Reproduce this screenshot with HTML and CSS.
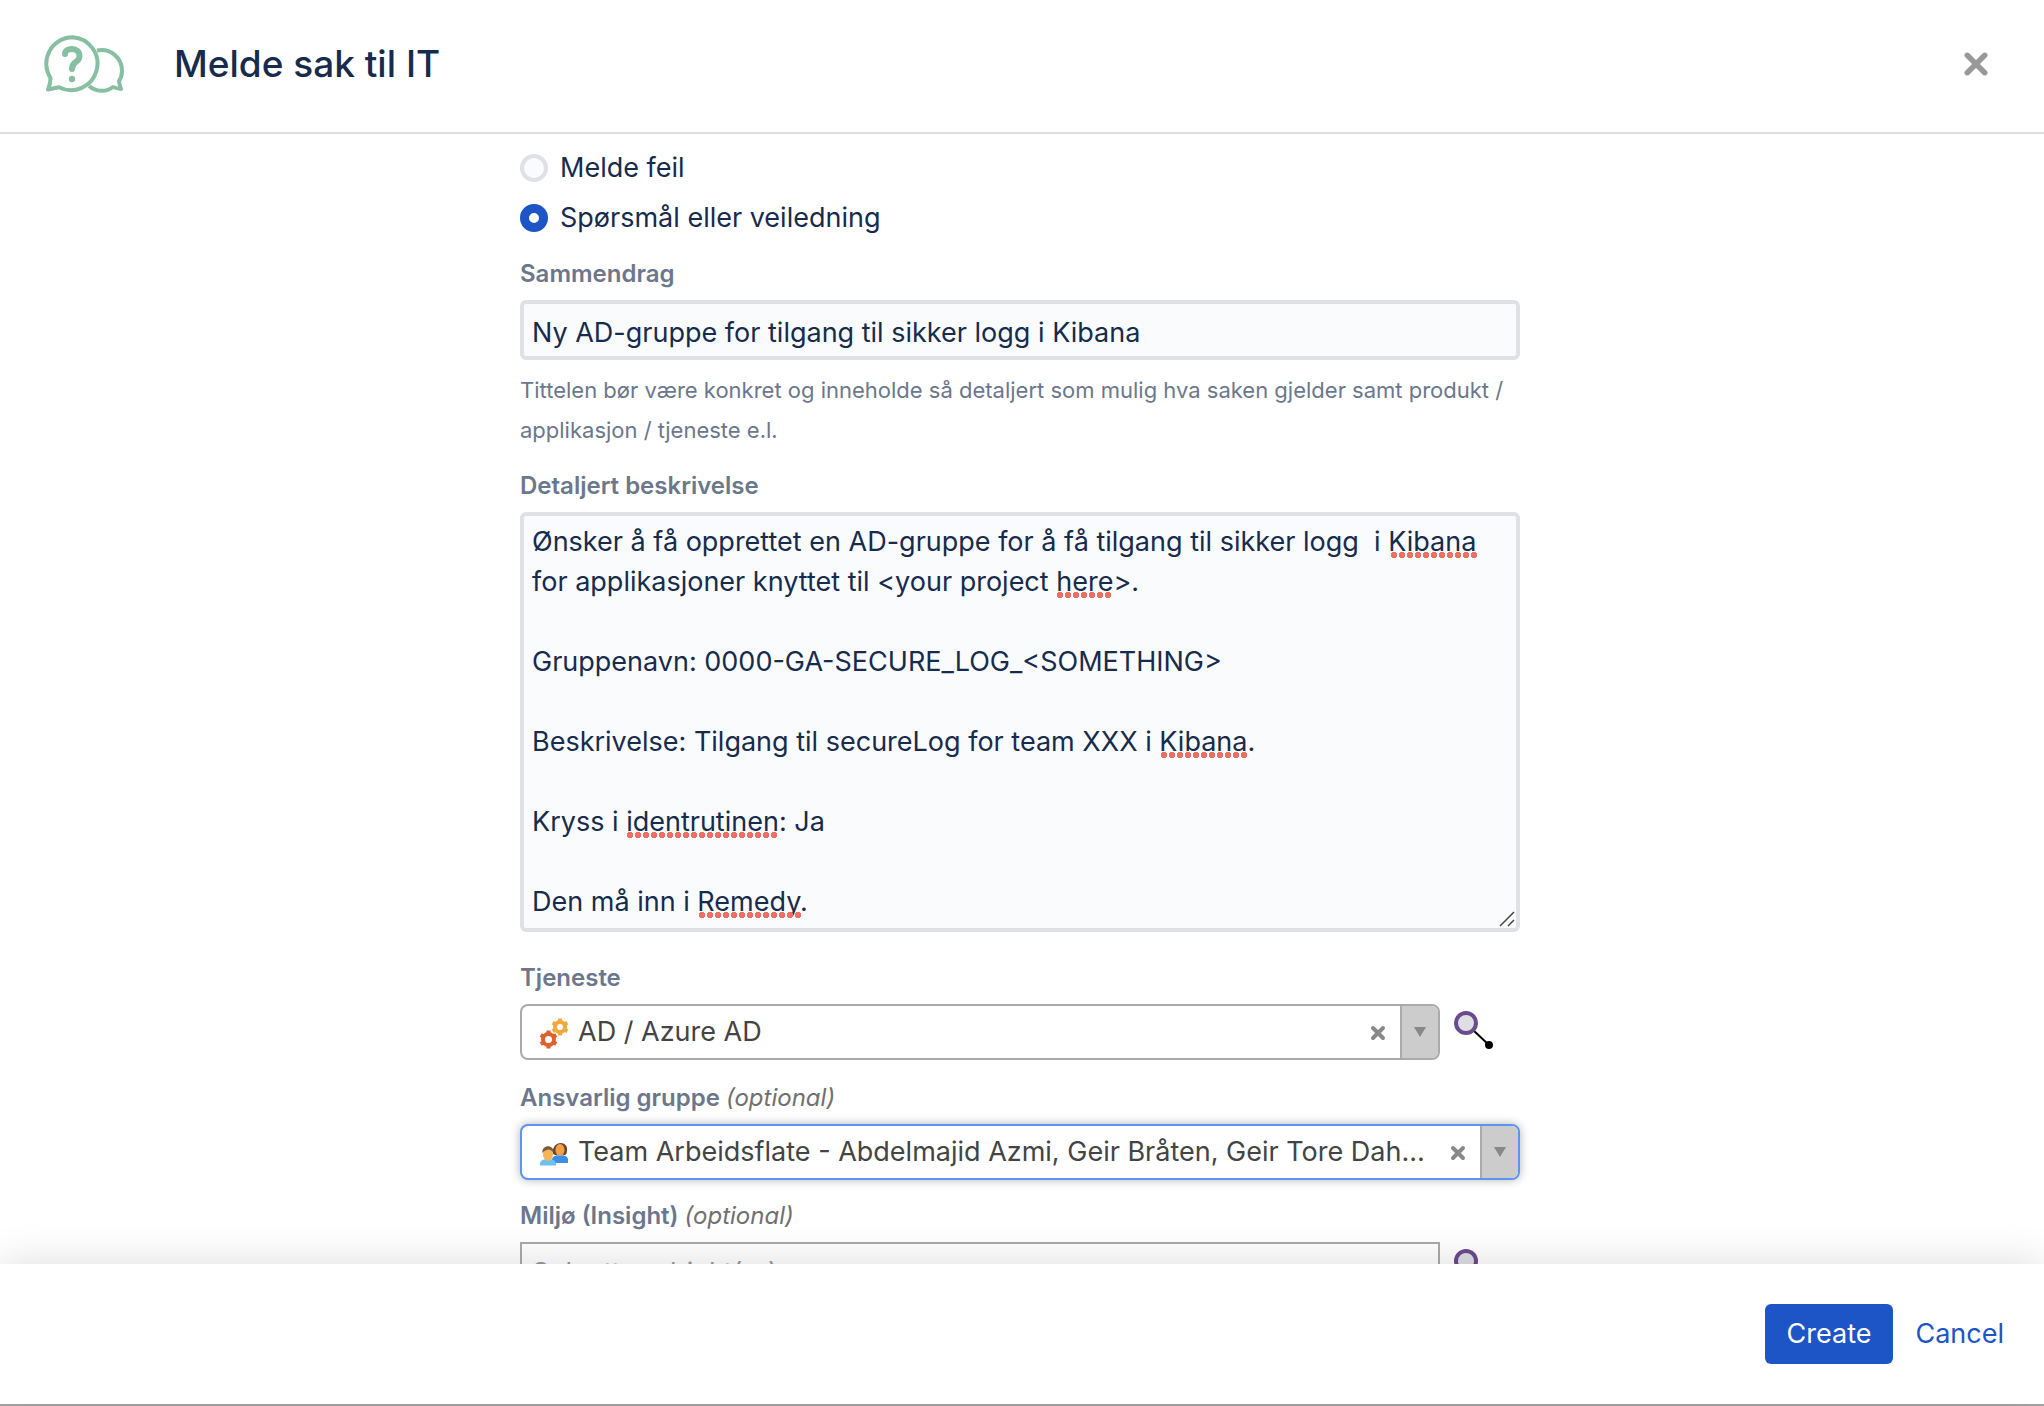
FILE: index.html
```html
<!DOCTYPE html>
<html lang="no">
<head>
<meta charset="utf-8">
<meta name="viewport" content="width=device-width, initial-scale=1">
<title>Melde sak til IT</title>
<link rel="stylesheet" href="styles.css">
</head>
<body>
<div class="dialog">
  <header class="dialog-header">
    <svg class="logo" viewBox="0 0 80 58" aria-hidden="true">
      <path d="M53 15.500C66 13 78 22 78 36C78 40 77 43 75 46Q75.500 50 77 54Q73 53.500 69 52C62 57.500 52 57 45 51"/>
      <path d="M28.500 2.200A26.500 26.500 0 1 1 15 52.300Q9 53.500 4 54.500Q6.500 49 6.500 43A26.500 26.500 0 0 1 28.500 2.200Z"/>
      <path class="logo-mark" d="M21 19C21 12 35.500 12 35.500 21C35.500 28 28 25.500 28 34"/>
      <circle class="logo-dot" cx="28" cy="44" r="3.200"/>
    </svg>
    <h1 class="dialog-title">Melde sak til IT</h1>
    <button class="icon-button close" type="button" aria-label="Close">
      <svg viewBox="0 0 22 22"><path d="M3 3L19 19M19 3L3 19"/></svg>
    </button>
  </header>

  <main class="dialog-body">
    <form class="form" id="request-form">
      <div class="radios">
        <label class="radio"><input type="radio" name="kind">Melde feil</label>
        <label class="radio"><input type="radio" name="kind" checked>Spørsmål eller veiledning</label>
      </div>

      <div class="field">
        <label class="label" for="summary">Sammendrag</label>
        <input class="text-input" id="summary" type="text" value="Ny AD-gruppe for tilgang til sikker logg i Kibana">
        <p class="help">Tittelen bør være konkret og inneholde så detaljert som mulig hva saken gjelder samt produkt / applikasjon / tjeneste e.l.</p>
      </div>

      <div class="field description">
        <label class="label" for="description">Detaljert beskrivelse</label>
        <div class="editor">
          <textarea class="text-area" id="description" rows="10" spellcheck="false">Ønsker å få opprettet en AD-gruppe for å få tilgang til sikker logg  i Kibana for applikasjoner knyttet til &lt;your project here&gt;.

Gruppenavn: 0000-GA-SECURE_LOG_&lt;SOMETHING&gt;

Beskrivelse: Tilgang til secureLog for team XXX i Kibana.

Kryss i identrutinen: Ja

Den må inn i Remedy.</textarea>
          <span class="typo typo-1"></span>
          <span class="typo typo-2"></span>
          <span class="typo typo-3"></span>
          <span class="typo typo-4"></span>
          <span class="typo typo-5"></span>
          <svg class="grip" viewBox="0 0 16 16" aria-hidden="true"><path d="M1 15L15 1M9 15L15 9"/></svg>
        </div>
      </div>

      <div class="field">
        <label class="label" for="service">Tjeneste</label>
        <div class="picker-row">
          <div class="picker">
            <svg class="picker-icon" viewBox="0 0 32 32" aria-hidden="true">
              <g class="gear gear-amber"><circle cx="22" cy="11" r="5"/><path d="M22 2.500V5M22 17V19.500M14.600 6.700L17 8M27 14L29.400 15.300M14.600 15.300L17 14M27 8L29.400 6.700"/></g>
              <g class="gear gear-red"><circle cx="10.500" cy="23.500" r="5.500"/><path d="M10.500 14.500V17M10.500 30V32.500M2.700 19L5 20.300M16 26.700L18.300 28M2.700 28L5 26.700M16 20.300L18.300 19"/></g>
            </svg>
            <select class="picker-value" id="service"><option>AD / Azure AD</option></select>
            <button class="icon-button clear" type="button" aria-label="Clear"><svg viewBox="0 0 16 16"><path d="M3 3L13 13M13 3L3 13"/></svg></button>
            <span class="arrow"></span>
          </div>
          <button class="icon-button lookup" type="button" aria-label="Search objects">
            <svg viewBox="0 0 44 44"><path d="M19 21L35 36"/><circle class="lens" cx="12" cy="14" r="10"/><circle class="knob" cx="35" cy="36" r="3"/></svg>
          </button>
        </div>
      </div>

      <div class="field">
        <label class="label" for="group">Ansvarlig gruppe <em class="optional">(optional)</em></label>
        <div class="picker picker-focused">
          <svg class="picker-icon" viewBox="0 0 32 32" aria-hidden="true">
            <path fill="#3b8fe8" d="M14 27V23Q15 19 22 19Q29 19 30 23V27Z"/>
            <path fill="#6b4636" d="M15 18C13 4 31 4 29 15Q29 18 27 19H17Z"/>
            <ellipse cx="22" cy="14" rx="4.500" ry="6" fill="#f2a146"/>
            <path fill="#6cc0f2" d="M2 29.500V27Q3 23 10 23Q17 23 18 27V29.500Z"/>
            <ellipse cx="10" cy="18" rx="5" ry="7" fill="#f5b455"/>
            <path fill="#7d5a41" d="M4.500 17C3 8 17 8 15.500 17Q14 14 11 13.500Q6 14 4.500 17Z"/>
          </svg>
          <select class="picker-value" id="group"><option>Team Arbeidsflate - Abdelmajid Azmi, Geir Bråten, Geir Tore Dah...</option></select>
          <button class="icon-button clear" type="button" aria-label="Clear"><svg viewBox="0 0 16 16"><path d="M3 3L13 13M13 3L3 13"/></svg></button>
          <span class="arrow"></span>
        </div>
      </div>

      <div class="field">
        <label class="label" for="environment">Miljø (Insight) <em class="optional">(optional)</em></label>
        <div class="picker-row">
          <input class="object-input" id="environment" type="text" placeholder="Søk etter objekt(er)">
          <button class="icon-button lookup" type="button" aria-label="Search objects">
            <svg viewBox="0 0 44 44"><path d="M19 21L35 36"/><circle class="lens" cx="12" cy="14" r="10"/><circle class="knob" cx="35" cy="36" r="3"/></svg>
          </button>
        </div>
      </div>
    </form>
  </main>

  <footer class="dialog-footer">
    <button class="primary" type="submit" form="request-form">Create</button>
    <a class="cancel" href="#">Cancel</a>
  </footer>
</div>
</body>
</html>
```
FILE: styles.css
```css
* { box-sizing: border-box; }
body {
  margin: 0;
  font-family: Inter, "Liberation Sans", sans-serif;
  font-size: 27px;
  line-height: 40px;
  color: #172b4d;
  background: #fff;
}
button, input, textarea, select { font: inherit; color: inherit; }
.dialog { display: flex; flex-direction: column; height: 100vh; border-bottom: 2px solid #a9a9a9; }
.dialog-header {
  display: flex; align-items: center; gap: 50px;
  padding: 35px 56px 39px 44px;
  border-bottom: 2px solid #ddd;
}
.logo { width: 80px; height: 58px; fill: none; stroke: #86bfa1; stroke-width: 4; stroke-linejoin: round; }
.logo path:nth-child(2) { fill: #fff; }
.logo .logo-mark { stroke-width: 6; stroke-linecap: round; }
.logo .logo-dot { fill: #86bfa1; stroke: none; }
.dialog-title { flex: 1; margin: 0; font-size: 37px; font-weight: 500; line-height: 48px; }
.icon-button { padding: 0; border: 0; background: none; cursor: pointer; }
.icon-button svg { display: block; }
.close svg { width: 24px; height: 24px; fill: none; stroke: #999; stroke-width: 5; stroke-linecap: round; }

.dialog-body { flex: 1; min-height: 0; overflow-y: auto; scrollbar-width: none; padding: 14px 4px 0 0; }
.form { display: flex; flex-direction: column; gap: 16px; width: 1000px; max-width: 100%; margin: 0 auto; }
.radios { display: flex; flex-direction: column; gap: 10px; }
.radio { display: flex; align-items: center; gap: 12px; }
.radio input {
  appearance: none; width: 28px; height: 28px; margin: 0;
  border: 4px solid #dfe1e6; border-radius: 50%; background: #fafbfc;
}
.radio input:checked { border: 9px solid #1d54c6; background: #fff; }
.field { display: flex; flex-direction: column; }
.label { margin-bottom: 6px; font-size: 24px; font-weight: 600; color: #6b778c; }
.optional { font-weight: 400; color: #707070; }
.text-input, .text-area {
  display: block; width: 100%; margin: 0;
  border: 4px solid #dfe1e5; border-radius: 6px; background: #fafbfd; outline: 0;
}
.text-input { height: 60px; padding: 4px 8px 0; }
.text-area { padding: 6px 8px; resize: none; overflow: hidden; }
.help { margin: 10px 0 0; font-size: 22px; color: #6b778c; }
.description { margin-bottom: 10px; }
.editor { position: relative; }
.typo {
  position: absolute; height: 6px; pointer-events: none;
  background: radial-gradient(circle, #ee6f63 3px, transparent 3px) 0 0 / 8px 6px repeat-x;
}
.typo-1 { left: 870px; top: 40px; width: 88px; }
.typo-2 { left: 536px; top: 80px; width: 56px; }
.typo-3 { left: 640px; top: 240px; width: 88px; }
.typo-4 { left: 106px; top: 320px; width: 152px; }
.typo-5 { left: 178px; top: 400px; width: 104px; }
.grip { position: absolute; right: 5px; bottom: 5px; width: 16px; height: 16px; fill: none; stroke: #444; stroke-width: 1.500; }

.picker-row { display: flex; align-items: flex-start; gap: 12px; padding-bottom: 2px; }
.picker {
  display: flex; align-items: center; flex: 1; min-width: 0; height: 56px; padding-left: 16px;
  border: 2px solid #aaa; border-radius: 8px; background: #fff; overflow: hidden; color: #444;
}
.picker-focused { flex: none; border-color: #5e92f3; box-shadow: 0 0 10px rgba(0, 0, 0, .3); }
.picker-icon { width: 32px; height: 34px; }
.gear { fill: none; stroke-width: 4; }
.gear-amber { stroke: #f4a93f; }
.gear-red { stroke: #dc6230; }
.picker-value { flex: 1; min-width: 0; appearance: none; padding: 0 0 0 8px; border: 0; background: none; outline: 0; }
.clear { padding: 2px 14px 0 12px; }
.clear svg { width: 16px; height: 16px; fill: none; stroke: #888; stroke-width: 4; stroke-linecap: round; }
.arrow { display: flex; align-items: center; justify-content: center; width: 38px; height: 100%; border-left: 2px solid #aaa; background: #ccc; }
.arrow::before { content: ""; border: 6px solid transparent; border-top: 10px solid #888; border-bottom: 0; }
.lookup { width: 68px; padding-top: 5px; }
.lookup svg { width: 44px; height: 44px; margin-left: 2px; stroke: #000; stroke-width: 2; }
.lookup .lens { fill: #dddfe2; stroke: #6b4a8e; stroke-width: 4; }
.object-input { flex: 1; min-width: 0; height: 60px; padding: 0 10px; border: 2px solid #aaa; background: #fff; }
.object-input::placeholder { color: #999; opacity: 1; }

.dialog-footer {
  position: relative;
  display: flex; align-items: center; justify-content: flex-end; gap: 22px;
  padding: 40px;
  background: #fff; box-shadow: 0 0 40px rgba(0, 0, 0, .14);
}
.primary { height: 60px; padding: 0 22px; border: 0; border-radius: 6px; background: #1d54c6; color: #fff; }
.cancel { color: #1d54c6; text-decoration: none; }
```
